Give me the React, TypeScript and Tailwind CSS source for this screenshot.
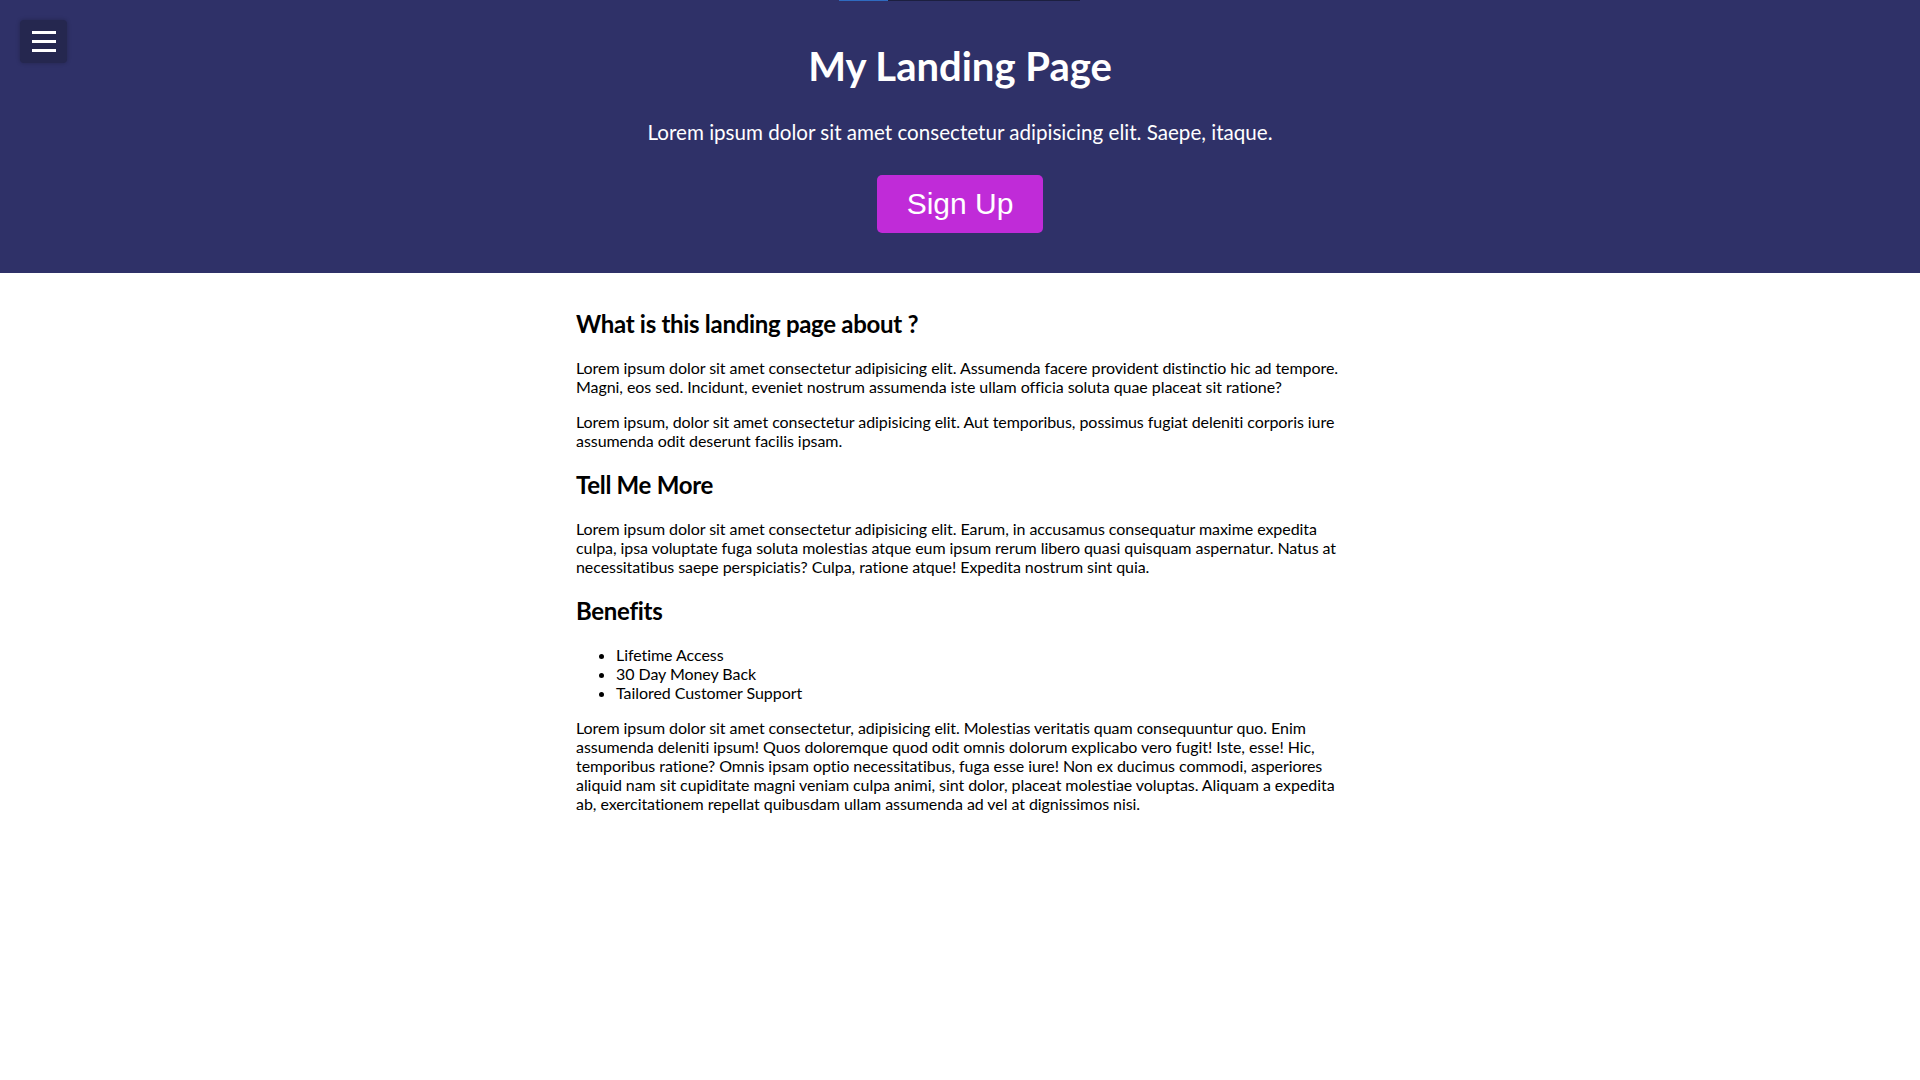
const benefits = ['Lifetime Access', '30 Day Money Back', 'Tailored Customer Support'];

const App = () => {
  return (
    <div className="min-h-screen bg-white font-['Lato','Noto_Sans',sans-serif] text-black">
      {/* top loading bar */}
      <div className="absolute left-[839px] top-0 flex h-px w-[241px] bg-[#1c1f3f]">
        <div className="h-full w-[49px] bg-[#2f6bc0]" />
      </div>

      <button
        type="button"
        aria-label="menu"
        className="fixed left-[20px] top-[20px] flex h-[43px] w-[47px] flex-col items-center justify-center gap-[6px] rounded-[4px] bg-[#25274f] shadow-[0_0_4px_rgba(0,0,0,0.25)]"
      >
        <span className="block h-[3px] w-[24px] bg-white" />
        <span className="block h-[3px] w-[24px] bg-white" />
        <span className="block h-[3px] w-[24px] bg-white" />
      </button>

      <header className="flex h-[273px] flex-col items-center bg-[#2f3168] pt-[42px] text-white">
        <h1 className="text-[40px] font-bold leading-[48px]">My Landing Page</h1>
        <p className="mt-[30px] text-[20.6px] leading-[24px]">
          Lorem ipsum dolor sit amet consectetur adipisicing elit. Saepe, itaque.
        </p>
        <button
          type="button"
          className="mt-[31px] h-[58px] w-[166px] rounded-[5px] bg-[#c02bd8] font-['Liberation_Sans',Arial,sans-serif] text-[30px] leading-none text-white"
        >
          Sign Up
        </button>
      </header>

      <main className="mx-auto w-[768px] pt-[16px] text-[16px] leading-[19px] tracking-[-0.06px]">
        <h2 className="my-[20px] text-[24px] font-bold leading-[29px] tracking-[-0.3px]">
          What is this landing page about ?
        </h2>
        <p className="my-4">
          Lorem ipsum dolor sit amet consectetur adipisicing elit. Assumenda facere provident distinctio hic ad
          tempore. Magni, eos sed. Incidunt, eveniet nostrum assumenda iste ullam officia soluta quae placeat sit
          ratione?
        </p>
        <p className="my-4">
          Lorem ipsum, dolor sit amet consectetur adipisicing elit. Aut temporibus, possimus fugiat deleniti corporis
          iure assumenda odit deserunt facilis ipsam.
        </p>

        <h2 className="my-[20px] text-[24px] font-bold leading-[29px] tracking-[-0.3px]">Tell Me More</h2>
        <p className="my-4">
          Lorem ipsum dolor sit amet consectetur adipisicing elit. Earum, in accusamus consequatur maxime expedita
          culpa, ipsa voluptate fuga soluta molestias atque eum ipsum rerum libero quasi quisquam aspernatur. Natus at
          necessitatibus saepe perspiciatis? Culpa, ratione atque! Expedita nostrum sint quia.
        </p>

        <h2 className="my-[20px] text-[24px] font-bold leading-[29px] tracking-[-0.3px]">Benefits</h2>
        <ul className="my-4 list-disc pl-10">
          {benefits.map((item) => (
            <li key={item}>{item}</li>
          ))}
        </ul>
        <p className="my-4">
          Lorem ipsum dolor sit amet consectetur, adipisicing elit. Molestias veritatis quam consequuntur quo. Enim
          assumenda deleniti ipsum! Quos doloremque quod odit omnis dolorum explicabo vero fugit! Iste, esse! Hic,
          temporibus ratione? Omnis ipsam optio necessitatibus, fuga esse iure! Non ex ducimus commodi, asperiores
          aliquid nam sit cupiditate magni veniam culpa animi, sint dolor, placeat molestiae voluptas. Aliquam a
          expedita ab, exercitationem repellat quibusdam ullam assumenda ad vel at dignissimos nisi.
        </p>
      </main>
    </div>
  );
};

export default App;
